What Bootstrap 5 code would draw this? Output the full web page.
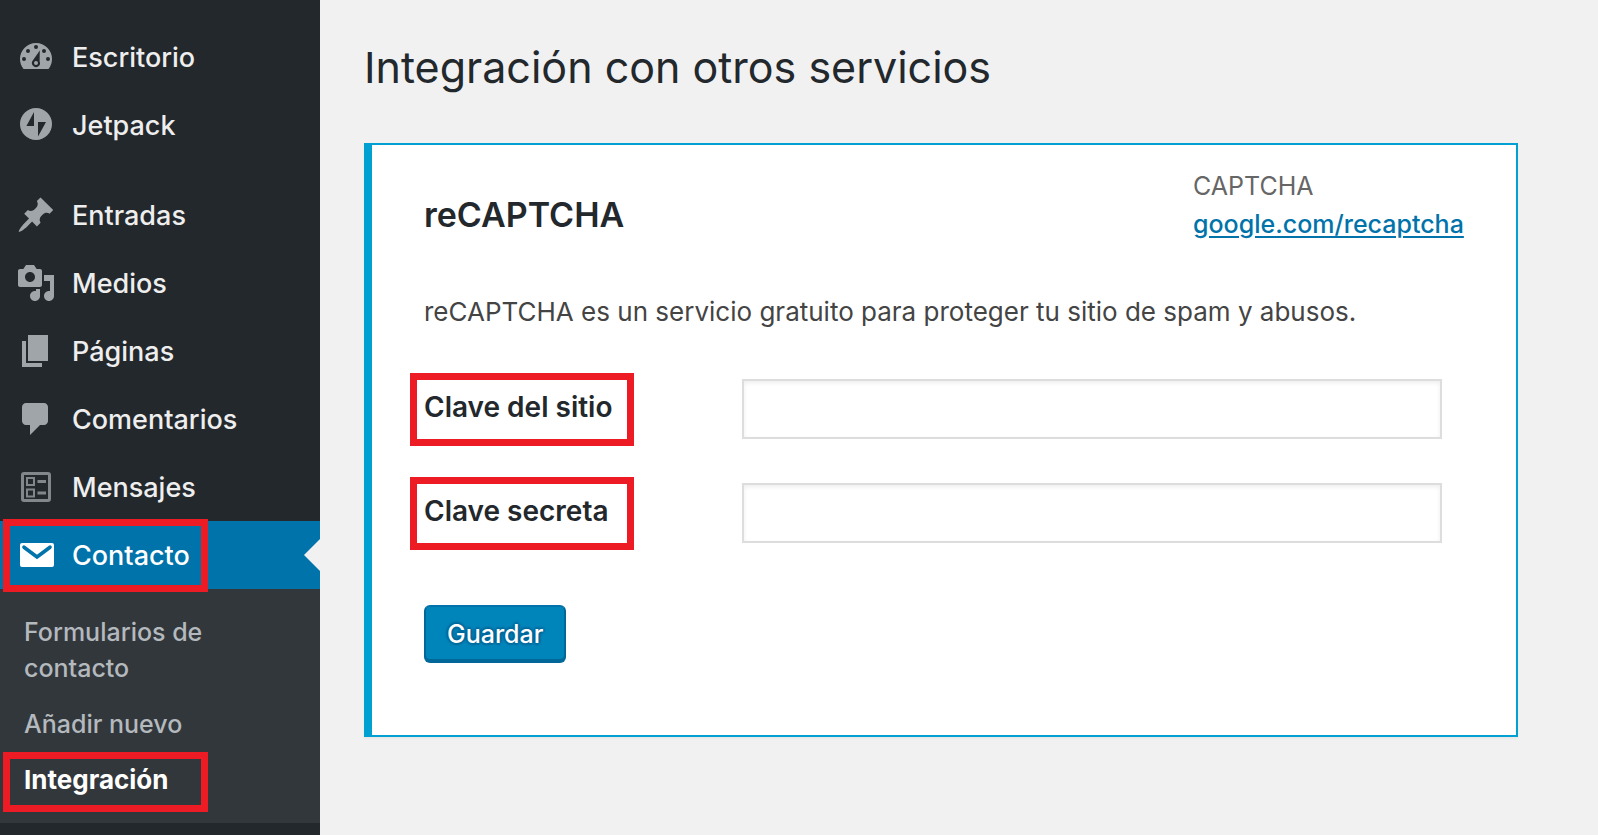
<!DOCTYPE html>
<html lang="es">
<head>
<meta charset="utf-8">
<meta name="viewport" content="width=device-width, initial-scale=1">
<title>Integración con otros servicios</title>
<link href="https://cdn.jsdelivr.net/npm/bootstrap@5.3.0/dist/css/bootstrap.min.css" rel="stylesheet">
<style>
  body { font-family: Inter, "Liberation Sans", sans-serif; font-size: 25px; background: #f1f1f1; color: #444; }

  /* Admin menu */
  .admin-menu { width: 320px; background: #23282d; padding-top: 23px; }
  .admin-menu .nav-link { position: relative; height: 68px; padding: 0 16px; gap: 16px; font-size: 27px; font-weight: 500; line-height: 68px; color: #eee; }
  .admin-menu .nav-link span { padding-top: 1px; }
  .admin-menu svg { width: 40px; height: 40px; fill: #a0a5aa; }
  .menu-gap { margin-top: 22px; }
  .admin-menu .nav-link.active { background: #0073aa; color: #fff; }
  .admin-menu .nav-link.active svg { fill: #fff; }
  .admin-menu .nav-link.active::after { content: ""; position: absolute; right: 0; top: 18px; border: 16px solid transparent; border-left: 0; border-right-color: #f1f1f1; }
  .submenu { background: #32373c; padding: 15px 0; }
  .submenu a { position: relative; display: block; padding: 10px 80px 10px 24px; font-size: 25px; font-weight: 500; line-height: 36px; color: #b4b9be; text-decoration: none; }
  .submenu a.current { color: #fff; font-size: 26px; font-weight: 700; }

  /* Red highlight frames drawn over the items */
  .framed::before { content: ""; position: absolute; z-index: 1; border: 7px solid #ed1c24; pointer-events: none; }
  .nav-link.framed::before { left: 3px; width: 205px; top: -2px; height: 73px; }
  .submenu .framed::before { left: 3px; width: 205px; top: 0; height: 60px; }
  .key-label.framed::before { left: -14px; width: 224px; top: -14px; height: 73px; }

  /* Main column */
  .main-col { padding: 39px 80px 40px 44px; }
  .page-title { font-size: 43px; line-height: 56px; font-weight: 400; color: #23282d; margin-bottom: 48px; }
  .service { border: 2px solid #00a0d2; border-left-width: 8px; background: #fff; padding: 22px 52px 72px; box-shadow: 0 2px 2px rgba(0, 0, 0, .04); }
  .service h2 { font-size: 34px; line-height: 44px; font-weight: 600; color: #23282d; margin: 26px 0 0; }
  .service-meta { min-width: 271px; line-height: 38px; color: #666; }
  .service-meta a { color: #0073aa; font-weight: 500; text-underline-offset: 3px; }
  .service-text { font-size: 26px; line-height: 40px; margin: 49px 0 47px; }
  .key-rows { gap: 44px; margin-right: 22px; }
  .key-cell { width: 318px; padding-top: 8px; }
  .key-label { position: relative; font-size: 28px; line-height: 40px; font-weight: 600; color: #23282d; }
  .key-input { height: 60px; border: 2px solid #ddd; border-radius: 0; box-shadow: inset 0 2px 4px rgba(0, 0, 0, .07); font-size: 28px; }
  .btn-save { height: 58px; margin-top: 62px; padding: 0 21px; font-size: 25px; font-weight: 500; line-height: 52px; color: #fff; background: #0085ba; border: 2px solid; border-color: #0073aa #006799 #006799; border-radius: 6px; box-shadow: inset 0 -2px 0 #006799; text-shadow: 0 -2px 2px #006799, 2px 0 2px #006799, 0 2px 2px #006799, -2px 0 2px #006799; }
  .btn-save:hover { color: #fff; background: #008ec2; }
</style>
</head>
<body>
<div class="d-flex min-vh-100">
  <nav class="admin-menu flex-shrink-0" aria-label="Menú principal">
    <div class="nav flex-column flex-nowrap">
      <a class="nav-link d-flex align-items-center" href="#">
        <svg viewBox="0 0 20 20" aria-hidden="true"><path fill-rule="evenodd" d="M3.76 16h12.48A7.97 7.97 0 0 0 18 11a8 8 0 1 0-16 0c0 1.89.66 3.63 1.76 5zM10 4a1 1 0 1 1 0 2 1 1 0 0 1 0-2zM6 6a1 1 0 1 1 0 2 1 1 0 0 1 0-2zm8 0a1 1 0 1 1 0 2 1 1 0 0 1 0-2zM4 10a1 1 0 1 1 0 2 1 1 0 0 1 0-2zm12 0a1 1 0 1 1 0 2 1 1 0 0 1 0-2zM11.9 6.8l-.1 5.4A2 2 0 1 1 8.400 11.800zM10 12a1 1 0 1 0 0 2 1 1 0 0 0 0-2z"/></svg>
        <span>Escritorio</span></a>
      <a class="nav-link d-flex align-items-center" href="#">
        <svg viewBox="0 0 20 20" aria-hidden="true"><path fill-rule="evenodd" d="M10 1.5a8 8 0 1 0 0 16 8 8 0 0 0 0-16zM9 3.5v7H5.2zM11 8.5h4l-4 7.2z"/></svg>
        <span>Jetpack</span></a>
      <a class="nav-link d-flex align-items-center menu-gap" href="#">
        <svg viewBox="0 0 20 20" aria-hidden="true"><path d="M10.44 3.02l1.82-1.82 6.36 6.35-1.83 1.82c-1.05-.68-2.48-.57-3.41.36l-.75.75c-.92.93-1.04 2.35-.35 3.41l-1.83 1.82-2.41-2.41-2.8 2.79c-.42.42-3.38 2.71-3.8 2.29s1.86-3.39 2.28-3.81l2.79-2.79L4.1 9.36l1.83-1.82c1.05.69 2.48.57 3.4-.36l.75-.75c.93-.92 1.05-2.35.36-3.41z"/></svg>
        <span>Entradas</span></a>
      <a class="nav-link d-flex align-items-center" href="#">
        <svg viewBox="0 0 20 20" aria-hidden="true"><path d="M13 11V4c0-.55-.45-1-1-1h-1.67L9 1H5L3.67 3H2c-.55 0-1 .45-1 1v7c0 .55.45 1 1 1h10c.55 0 1-.45 1-1zM7 4.5c1.38 0 2.5 1.12 2.5 2.5S8.38 9.5 7 9.5 4.5 8.38 4.5 7 5.62 4.5 7 4.5zM14 6h5v10.5c0 1.38-1.12 2.5-2.5 2.5S14 17.88 14 16.5s1.12-2.5 2.5-2.5c.17 0 .34.02.5.05V9h-3V6zm-4 8.05V13h2v3.5c0 1.38-1.12 2.5-2.5 2.5S7 17.88 7 16.5 8.12 14 9.5 14c.17 0 .34.02.5.05z"/></svg>
        <span>Medios</span></a>
      <a class="nav-link d-flex align-items-center" href="#">
        <svg viewBox="0 0 20 20" aria-hidden="true"><path d="M6 15V2h10v13H6zm-1 1h8v2H3V5h2v11z"/></svg>
        <span>Páginas</span></a>
      <a class="nav-link d-flex align-items-center" href="#">
        <svg viewBox="0 0 20 20" aria-hidden="true"><path d="M5 2h9c1.1 0 2 .9 2 2v7c0 1.1-.9 2-2 2h-2l-5 5v-5H5c-1.1 0-2-.9-2-2V4c0-1.1.9-2 2-2z"/></svg>
        <span>Comentarios</span></a>
      <a class="nav-link d-flex align-items-center" href="#">
        <svg viewBox="0 0 40 40" aria-hidden="true"><g fill="none" stroke="#82878c"><rect x="6.500" y="6.500" width="27" height="27" rx="1.500" stroke-width="3"/><path d="M11 11h7v7h-7zM11 22.500h7v7h-7z" stroke-width="2"/><path d="M21.500 14.500H30M21.500 26H30" stroke-width="3"/></g></svg>
        <span>Mensajes</span></a>
      <a class="nav-link active framed d-flex align-items-center" href="#" aria-current="true">
        <svg viewBox="0 0 20 20" aria-hidden="true"><rect x="2" y="4" width="17" height="12" rx="1"/><path d="M4 6.100l6.500 4.900L17 6.100" fill="none" stroke="#0073aa" stroke-width="1.800" stroke-linecap="round"/></svg>
        <span>Contacto</span></a>
    </div>
    <div class="submenu">
      <a href="#">Formularios de contacto</a>
      <a href="#">Añadir nuevo</a>
      <a class="current framed" href="#" aria-current="page">Integración</a>
    </div>
  </nav>

  <main class="main-col flex-grow-1">
    <h1 class="page-title">Integración con otros servicios</h1>
    <section class="service">
      <div class="d-flex justify-content-between align-items-start">
        <h2>reCAPTCHA</h2>
        <div class="service-meta">CAPTCHA<br><a href="#">google.com/recaptcha</a></div>
      </div>
      <p class="service-text">reCAPTCHA es un servicio gratuito para proteger tu sitio de spam y abusos.</p>
      <form>
        <div class="key-rows d-flex flex-column">
          <div class="d-flex">
            <div class="key-cell flex-shrink-0"><label class="key-label framed" for="sitekey">Clave del sitio</label></div>
            <input class="form-control key-input" type="text" id="sitekey">
          </div>
          <div class="d-flex">
            <div class="key-cell flex-shrink-0"><label class="key-label framed" for="secret">Clave secreta</label></div>
            <input class="form-control key-input" type="text" id="secret">
          </div>
        </div>
        <button class="btn btn-save" type="submit">Guardar</button>
      </form>
    </section>
  </main>
</div>
<script src="https://cdn.jsdelivr.net/npm/bootstrap@5.3.0/dist/js/bootstrap.bundle.min.js"></script>
</body>
</html>
